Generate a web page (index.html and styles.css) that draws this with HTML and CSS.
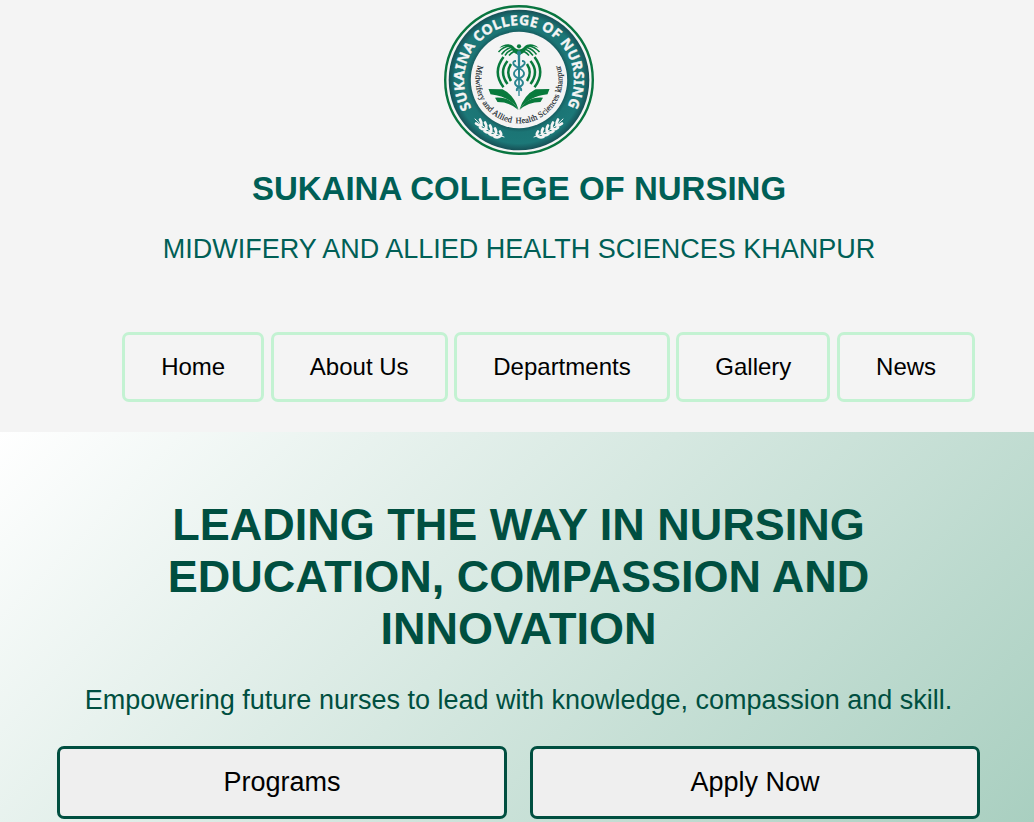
FILE: index.html
```html
<!DOCTYPE html>
<html lang="en">
<head>
<meta charset="utf-8">
<title>Sukaina College of Nursing</title>
<link rel="stylesheet" href="styles.css">
</head>
<body>
<header class="header">
  <svg class="logo" viewBox="0 0 150 150" role="img" aria-label="Sukaina College of Nursing">
    <defs>
      <radialGradient id="ring" gradientUnits="userSpaceOnUse" cx="75" cy="75" r="70.5">
        <stop offset=".67" stop-color="#16595c"/>
        <stop offset=".74" stop-color="#1b7575"/>
        <stop offset=".9" stop-color="#1c7878"/>
        <stop offset="1" stop-color="#164f55"/>
      </radialGradient>
      <path id="arc-top" d="M27.6 103A55 55 0 1 1 122.4 103"/>
      <path id="arc-bottom" d="M34.200 60.2A43.400 43.400 0 1 0 115.8 60.2"/>
      <g id="wing">
        <path d="M74.500 49.500C72 49.500 69 47 67.500 44C65 40.500 60 40.500 55.500 43C59 39 66 38 69.500 41.500C71 43.500 73 44.500 75 44.500Z" fill="#087a3c"/>
        <path d="M65 41Q59 42 54.500 47M67 42.500Q61.500 44 57.500 49.500M68 44.500Q64 46 61 50.500M70 46.500Q67 48 65 50.500" fill="none" stroke="#087a3c" stroke-width="1.500"/>
      </g>
      <g id="waves" fill="none" stroke="#087a3c" stroke-width="2.500">
        <path d="M59.500 52Q48 67 59.500 82.300"/>
        <path d="M63.500 56Q54.500 67 63.500 79"/>
        <path d="M67 59Q61.500 67.500 67 76"/>
      </g>
      <g id="pages" fill="#087a3c">
        <path d="M44.500 84L58.500 84.300Q70 90 74.500 104.500Q66 91.500 46.500 89.300Z"/>
        <path d="M51 92.700Q67 91.500 74.500 105Q66 97 53.500 97Z"/>
      </g>
      <g id="laurel" fill="none" stroke="#f4f4f4" stroke-linecap="round">
        <path d="M31 114Q43 127 60 132" stroke-width="1"/>
        <path d="M36 114.500Q38 117.500 37.500 120.500M41 117.500Q43 120.500 42.300 124M46 120.500Q48 123.500 47 127M51 123.500Q53 126.500 51.500 129.500M56 126.500Q58 129 56.500 131M32 118.500Q35 121 37.500 120.500M36 122.500Q39 125.200 42.300 124M40.500 126Q43.500 128.700 47 127M45.500 129Q48.500 131.300 51.500 129.500M50.500 131.800Q54 133.300 56.500 131" stroke-width="2.700"/>
      </g>
    </defs>
    <circle cx="75" cy="75" r="73.800" fill="#f4f4f4" stroke="#08753f" stroke-width="2.400"/>
    <circle cx="75" cy="75" r="70.300" fill="url(#ring)"/>
    <circle cx="75" cy="75" r="48.200" fill="#f4f4f4"/>
    <text class="seal-name"><textPath href="#arc-top" textLength="229" lengthAdjust="spacing">SUKAINA COLLEGE OF NURSING</textPath></text>
    <text class="seal-sub"><textPath href="#arc-bottom" textLength="166" lengthAdjust="spacing">Midwifery and Allied <tspan dx="2">Health</tspan> Sciences khanpur</textPath></text>
    <use href="#laurel"/><use href="#laurel" transform="translate(150 0) scale(-1 1)"/>
    <use href="#wing"/><use href="#wing" transform="translate(150 0) scale(-1 1)"/>
    <use href="#waves"/><use href="#waves" transform="translate(150 0) scale(-1 1)"/>
    <use href="#pages"/><use href="#pages" transform="translate(150 0) scale(-1 1)"/>
    <circle cx="75" cy="41.300" r="2.100" fill="#087a3c"/>
    <path d="M73.700 47H76.300L75.600 91H74.400Z" fill="#2a8590"/>
    <path d="M72 56Q68.500 56 69.500 59Q70.500 61 75 63Q80.500 66 80 69Q79.500 72 75 73.500Q71 75.500 71 78Q71 80.500 75 82Q78 83.500 77 86M78 56Q81.500 56 80.500 59Q79.500 61 75 63Q69.500 66 70 69Q70.500 72 75 73.500Q79 75.500 79 78Q79 80.500 75 82Q72 83.500 73 86" fill="none" stroke="#2a8590" stroke-width="1.900"/>
    <circle cx="75" cy="48" r="2.200" fill="#2a8590"/>
  </svg>
  <h1 class="name">SUKAINA COLLEGE OF NURSING</h1>
  <p class="subname">MIDWIFERY AND ALLIED HEALTH SCIENCES KHANPUR</p>
  <nav class="nav">
    <a class="nav-link">Home</a>
    <a class="nav-link">About Us</a>
    <a class="nav-link">Departments</a>
    <a class="nav-link">Gallery</a>
    <a class="nav-link">News</a>
  </nav>
</header>
<main class="hero">
  <h2 class="headline">LEADING THE WAY IN NURSING EDUCATION, COMPASSION AND INNOVATION</h2>
  <p class="tagline">Empowering future nurses to lead with knowledge, compassion and skill.</p>
  <div class="actions">
    <button class="action">Programs</button>
    <button class="action">Apply Now</button>
  </div>
</main>
</body>
</html>
```
FILE: styles.css
```css
* { box-sizing: border-box; }
body {
  margin: 0;
  height: 822px;
  overflow: hidden;
  background: #f4f4f4;
  font-family: "Liberation Sans", Arial, sans-serif;
}
.header {
  height: 432px;
  padding: 5px 0 0 4px;
  display: flex;
  flex-direction: column;
  align-items: center;
  color: #005f56;
}
.logo { width: 150px; height: 150px; flex: none; }
.seal-name { font: bold 14px "Noto Sans", sans-serif; fill: #f4f4f4; stroke: #f4f4f4; stroke-width: .35px; }
.seal-sub { font: 8.4px "Liberation Serif", serif; fill: #17252b; stroke: #17252b; stroke-width: .15px; }
.name { margin: 15px 0 0; font-size: 33px; line-height: 38px; }
.subname { margin: 26px 0 0; font-size: 27px; line-height: 31px; }
.nav { display: flex; gap: 6.7px; margin: 67px 0 0 59.2px; }
.nav-link {
  padding: 18px 36px;
  height: 70px;
  border: 3px solid #c3f2d2;
  border-radius: 7px;
  color: #000;
  font-size: 24px;
  line-height: 28px;
}
.hero {
  height: 390px;
  padding: 67px 54px 0 57px;
  background: linear-gradient(135deg, #fff, #a9cfc0);
  color: #004f40;
  text-align: center;
}
.headline { margin: 0 auto; width: 760px; font-size: 45px; line-height: 52px; }
.tagline { margin: 30px 0 0; font-size: 27px; line-height: 31px; }
.actions { display: flex; gap: 23px; margin-top: 30px; }
.action {
  width: 450px;
  height: 73px;
  padding: 0;
  border: 3px solid #004f40;
  border-radius: 7px;
  background: #efefef;
  color: #000;
  font: 27px "Liberation Sans", Arial, sans-serif;
}
```
